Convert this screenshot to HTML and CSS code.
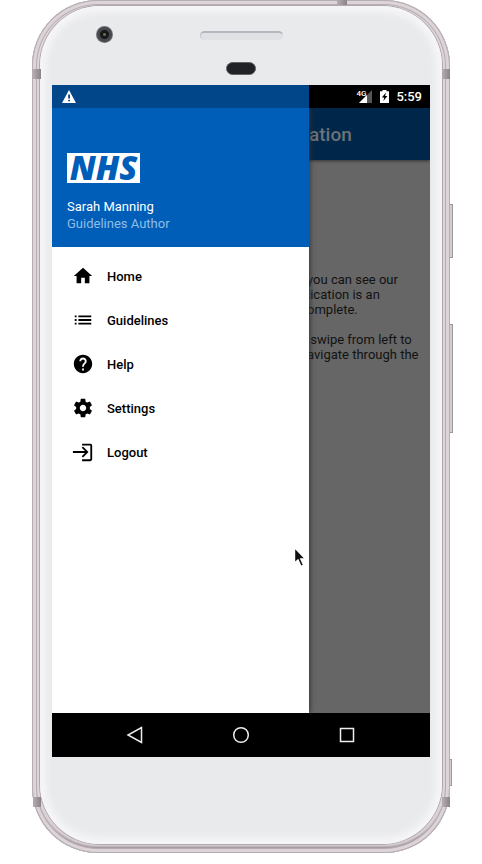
FILE: index.html
```html
<!DOCTYPE html>
<html lang="en">
<head>
<meta charset="utf-8">
<meta name="viewport" content="width=device-width, initial-scale=1">
<title>NHS Guidelines</title>
<link rel="stylesheet" href="styles.css">
</head>
<body>
<div class="phone">
  <i class="band band-top"></i>
  <i class="band band-left"></i><i class="band band-right"></i>
  <i class="band band-left band-low"></i><i class="band band-right band-low"></i>
  <i class="key key-power"></i><i class="key key-volume"></i><i class="key key-low"></i>
  <div class="glass">
    <div class="forehead">
      <i class="camera"></i>
      <i class="speaker"></i>
      <i class="sensor"></i>
    </div>
    <div class="screen">
      <header class="status">
        <svg class="warn" viewBox="0 0 14 13"><path fill="#fff" d="M7 0 14 13H0Z"/><path fill="#004689" d="M6.2 4.5h1.8v4H6.2zM6.2 9.7h1.8v1.6H6.2z"/></svg>
        <span class="network">4G</span>
        <svg class="signal" viewBox="0 0 13 13"><path fill="#555" d="M13 0V13H0Z"/><path fill="#fff" d="M8 5V13H0Z"/></svg>
        <svg class="battery" viewBox="0 0 9 13"><path fill="#fff" d="M2.5 0h4v1.2H9V13H0V1.2h2.5z"/><path fill="#000" d="M6 2.5 1.8 7.6h2.4L3.4 11 7.4 6H5.1z"/></svg>
        <time>5:59</time>
      </header>
      <main class="app">
        <div class="appbar"><h1>ation</h1></div>
        <div class="content"><p>you can see our
lication is an
omplete.</p><p> swipe from left to
avigate through the</p></div>
      </main>
      <aside class="drawer">
        <div class="profile">
          <div class="logo">NHS</div>
          <div class="name">Sarah Manning</div>
          <div class="role">Guidelines Author</div>
        </div>
        <nav class="menu">
          <a href="#home"><svg viewBox="0 0 24 24"><path d="M10 20v-6h4v6h5v-8h3L12 3 2 12h3v8z"/></svg>Home</a>
          <a href="#guidelines"><svg viewBox="0 0 24 24"><path d="M3 13h2v-2H3v2zm0 4h2v-2H3v2zm0-8h2V7H3v2zm4 4h14v-2H7v2zm0 4h14v-2H7v2zM7 7v2h14V7H7z"/></svg>Guidelines</a>
          <a href="#help"><svg viewBox="0 0 24 24"><path d="M12 2C6.48 2 2 6.48 2 12s4.48 10 10 10 10-4.48 10-10S17.52 2 12 2zm1 17h-2v-2h2v2zm2.07-7.75l-.9.92C13.45 12.9 13 13.5 13 15h-2v-.5c0-1.1.45-2.1 1.17-2.83l1.24-1.26c.37-.36.59-.86.59-1.41 0-1.1-.9-2-2-2s-2 .9-2 2H8c0-2.21 1.79-4 4-4s4 1.79 4 4c0 .88-.36 1.68-.93 2.25z"/></svg>Help</a>
          <a href="#settings"><svg viewBox="0 0 24 24"><path d="M19.43 12.98c.04-.32.07-.64.07-.98s-.03-.66-.07-.98l2.11-1.65c.19-.15.24-.42.12-.64l-2-3.46c-.12-.22-.39-.3-.61-.22l-2.49 1c-.52-.4-1.08-.73-1.69-.98l-.38-2.65C14.46 2.18 14.25 2 14 2h-4c-.25 0-.46.18-.49.42l-.38 2.65c-.61.25-1.17.59-1.69.98l-2.49-1c-.23-.09-.49 0-.61.22l-2 3.46c-.13.22-.07.49.12.64l2.11 1.65c-.04.32-.07.65-.07.98s.03.66.07.98l-2.11 1.65c-.19.15-.24.42-.12.64l2 3.46c.12.22.39.3.61.22l2.49-1c.52.4 1.08.73 1.69.98l.38 2.65c.03.24.24.42.49.42h4c.25 0 .46-.18.49-.42l.38-2.65c.61-.25 1.17-.59 1.69-.98l2.49 1c.23.09.49 0 .61-.22l2-3.46c.12-.22.07-.49-.12-.64l-2.11-1.65zM12 15.5c-1.93 0-3.5-1.57-3.5-3.5s1.57-3.5 3.5-3.5 3.5 1.57 3.5 3.5-1.57 3.5-3.5 3.5z"/></svg>Settings</a>
          <a href="#logout"><svg viewBox="0 0 24 24"><path d="M11 3h9a2 2 0 0 1 2 2v15a2 2 0 0 1-2 2h-9v-2h9V5h-9zM10.6 7.4 12 6l6 6-6 6-1.4-1.4 3.6-3.6H1v-2h13.2z"/></svg>Logout</a>
        </nav>
      </aside>
      <svg class="cursor" viewBox="0 0 14 22"><path d="M1.5 1.5v15.5l3.5-3 3 6.5 2.7-1.3-2.9-6.2h4.7z" fill="#111" stroke="#fff" stroke-width="1.4"/></svg>
      <footer class="navbar">
        <button aria-label="Back"><svg viewBox="0 0 18 18"><path d="M15.5 1.5v15L2 9z"/></svg></button>
        <button aria-label="Home"><svg viewBox="0 0 18 18"><circle cx="9" cy="9" r="7.3"/></svg></button>
        <button aria-label="Overview"><svg viewBox="0 0 18 18"><rect x="2.5" y="2.5" width="13" height="13"/></svg></button>
      </footer>
    </div>
  </div>
</div>
</body>
</html>
```
FILE: styles.css
```css
* { box-sizing: border-box; }
body { margin: 0; background: #fff; font-family: Roboto, sans-serif; }
h1, p { margin: 0; }

/* Handset */
.phone {
  position: relative;
  margin: 0 32px;
  padding: 6px 8px 9px;
  border-radius: 66px;
  background: #ddd5d9;
  box-shadow: inset 0 0 0 1px #b5adb1, inset 0 0 0 4px #dcd4d8, inset 0 0 0 5px #b5adb1, inset 0 -4px 3px 2px #857b81;
}
.glass {
  padding: 0 12px 87px;
  border-radius: 60px;
  background: #e9eaec;
  box-shadow: 0 0 0 1px #b0a8ac, inset 0 0 7px 6px #f6f6f8;
}
.band { position: absolute; width: 8px; height: 10px; background: linear-gradient(90deg, #b5adb0, #8a8387); }
.band-left { left: 1px; top: 69px; }
.band-right { right: 0; top: 69px; }
.band-low { top: auto; bottom: 46px; }
.band-top { top: 0; left: 305px; height: 5px; width: 10px; }
.key { position: absolute; right: -3px; width: 3px; background: #d0cecf; border: 1px solid #99999b; border-left: 0; }
.key-power { top: 204px; height: 54px; }
.key-volume { top: 324px; height: 109px; }
.key-low { top: 759px; height: 27px; right: -2px; width: 2px; }

.forehead { position: relative; height: 79px; display: flex; flex-direction: column; align-items: center; padding-top: 25px; }
.camera {
  position: absolute; left: 44px; top: 20px; width: 17px; height: 17px; border-radius: 50%;
  background: radial-gradient(circle, #6d6a35 0 1px, #16171b 2px 4px, #47484b 5px 7px, #707174 8px);
}
.speaker { width: 83px; height: 9px; border-radius: 5px; background: #dfe1e5; border-top: 2px solid #b2b7bf; border-left: 1px solid #c2c5ca; }
.sensor { margin-top: 22px; width: 30px; height: 13px; border-radius: 7px; background: #202226; border: 1px solid #606266; }

/* Screen */
.screen { position: relative; height: 672px; display: flex; flex-direction: column; background: #000; }
.status { height: 23px; display: flex; align-items: center; padding: 0 8px 0 10px; background: linear-gradient(90deg, #004689 68%, #000 68%); color: #fff; }
.warn { width: 14px; height: 13px; margin-right: auto; }
.network { align-self: flex-start; margin-top: 4px; font: 500 8px/9px Roboto, sans-serif; }
.signal { width: 13px; height: 13px; margin-left: -7px; }
.battery { width: 9px; height: 13px; margin: 0 7px 0 8px; }
.status time { font-size: 13px; font-weight: 500; }

.app { flex: 1; overflow: hidden; background: #666; color: #121212; }
.appbar { height: 52px; display: flex; align-items: center; padding-left: 68%; background: #00274a; box-shadow: 0 1px 3px #333; }
.appbar h1 { font-size: 19px; font-weight: 500; color: #6c7378; }
.content { padding: 112px 0 0 calc(68% - 2px); font-size: 13px; line-height: 15px; white-space: pre; }
.content p + p { margin-top: 15px; }

.drawer { position: absolute; top: 23px; bottom: 44px; left: 0; width: 68%; background: #fff; box-shadow: 1px 0 5px #333; clip-path: inset(0 -10px 0 0); }
.profile { height: 139px; padding: 45px 15px 0; background: #005eb8; color: #fff; font-size: 13px; line-height: 17px; }
.logo {
  display: flex; justify-content: center;
  width: 73px; height: 30px; margin-bottom: 15px; background: #fff; color: #005eb8;
  font: italic 800 33px/30px "Open Sans", sans-serif;
}
.role { color: #8fbde6; }
.menu { padding-top: 7px; }
.menu a { display: flex; align-items: center; gap: 13px; height: 44px; padding-left: 20px; color: #000; font-size: 13px; font-weight: 500; text-decoration: none; }
.menu svg { width: 22px; height: 22px; }

.cursor { position: absolute; left: 241px; top: 461px; width: 14px; height: 22px; }

.navbar { height: 44px; display: flex; justify-content: center; gap: 62px; }
.navbar button { width: 44px; padding: 0; border: 0; background: none; display: grid; place-items: center; }
.navbar svg { width: 18px; height: 18px; fill: none; stroke: #eee; stroke-width: 1.5; }
```
